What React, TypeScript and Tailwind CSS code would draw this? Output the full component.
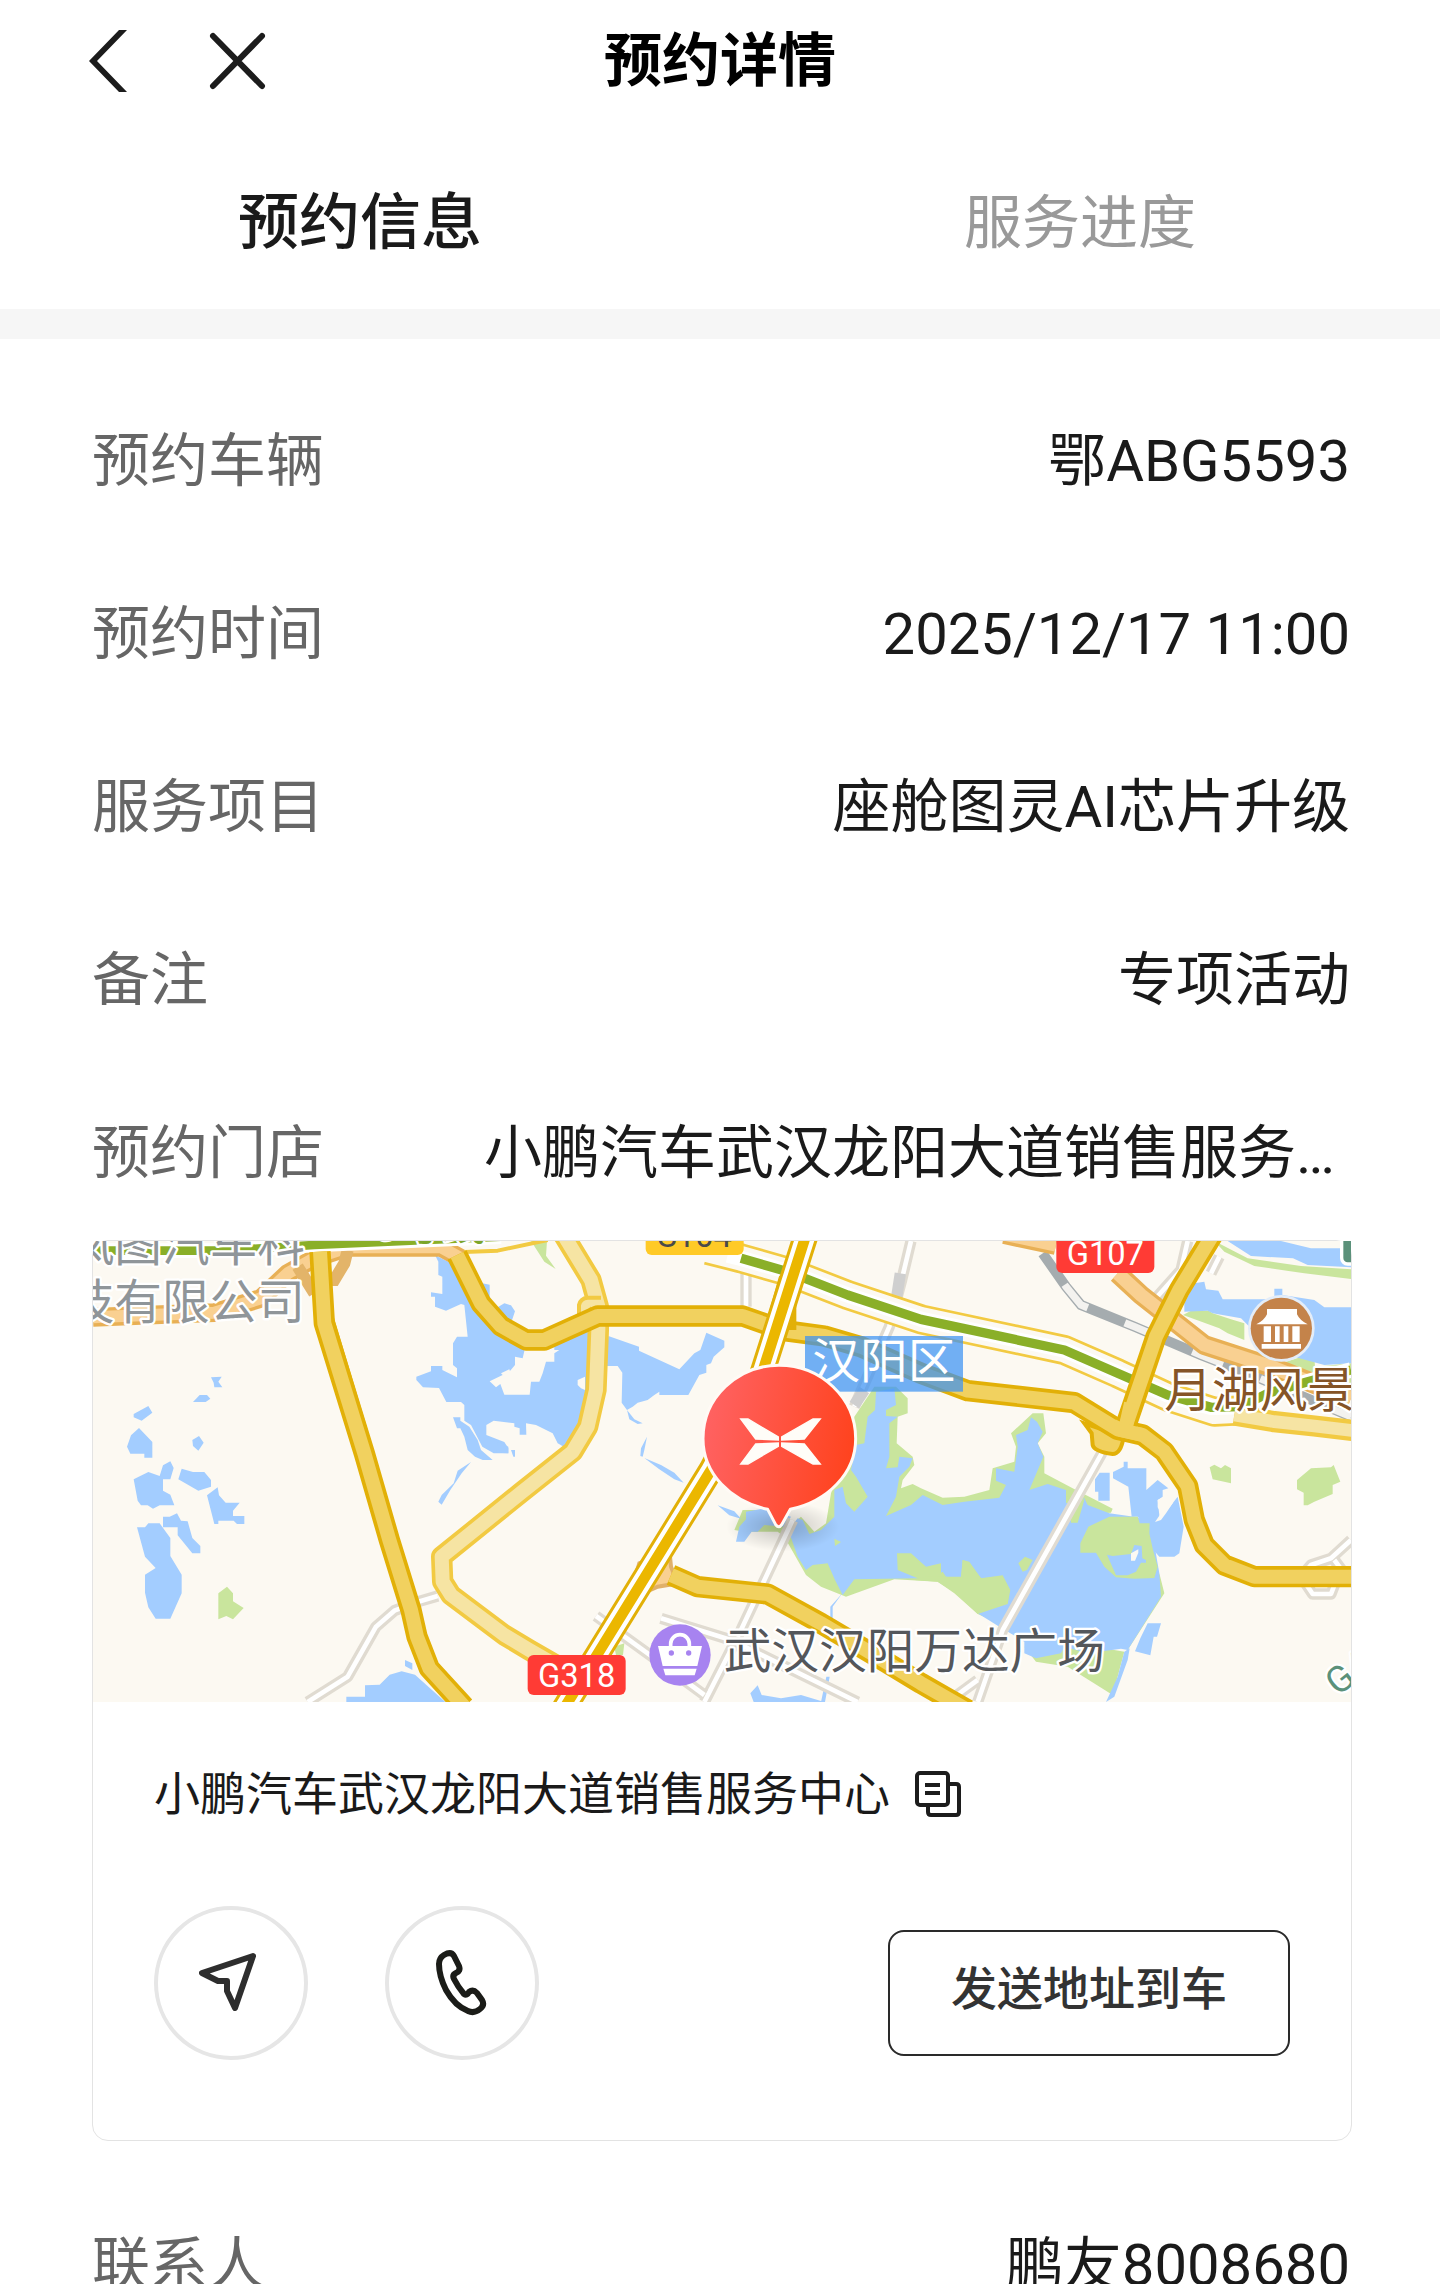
import type { ReactNode } from "react";

const details = [
  { label: "预约车辆", value: "鄂ABG5593" },
  { label: "预约时间", value: "2025/12/17 11:00" },
  { label: "服务项目", value: "座舱图灵AI芯片升级" },
  { label: "备注", value: "专项活动" },
  { label: "预约门店", value: "小鹏汽车武汉龙阳大道销售服务中心" },
];

function DetailRow({ label, value }: { label: string; value: string }) {
  return (
    <div className="flex h-[173px] items-center pr-[2px] text-[58px]">
      <dt className="shrink-0 text-[#666]">{label}</dt>
      <dd className="ml-40 min-w-0 flex-1 truncate text-right text-[#1a1a1a]">
        {value}
      </dd>
    </div>
  );
}

type RoadProps = {
  d: string;
  edge?: string;
  fill?: string;
  outer?: number;
  inner?: number;
};

function Road({
  d,
  edge = "#e2b007",
  fill = "#f1d15f",
  outer = 64,
  inner = 42,
}: RoadProps) {
  return (
    <g fill="none" strokeLinejoin="round">
      <path d={d} stroke={edge} strokeWidth={outer} />
      <path d={d} stroke={fill} strokeWidth={inner} />
    </g>
  );
}

function Street({ d }: { d: string }) {
  return <Road d={d} edge="#e0dbd1" fill="#fff" outer={34} inner={14} />;
}

function Shield({
  x,
  y,
  fill,
  color,
  children,
}: {
  x: number;
  y: number;
  fill: string;
  color: string;
  children: ReactNode;
}) {
  return (
    <g>
      <rect x={x} y={y} width="294" height="120" rx="18" fill={fill} />
      <text
        x={x + 147}
        y={y + 96}
        fontSize="98"
        textAnchor="middle"
        fill={color}
      >
        {children}
      </text>
    </g>
  );
}

function StoreMap() {
  return (
    <svg
      viewBox="36 33 3774 1383"
      className="block h-auto w-full bg-[#fcf9f2]"
      role="img"
      aria-label="门店地图"
    >
      <defs>
        <linearGradient id="pin" x1="0" y1="0.4" x2="1" y2="0.6">
          <stop offset="0" stopColor="#ff6262" />
          <stop offset="1" stopColor="#ff421c" />
        </linearGradient>
        <radialGradient id="pinShadow">
          <stop offset="0" stopColor="#000" stopOpacity="0.22" />
          <stop offset="1" stopColor="#000" stopOpacity="0" />
        </radialGradient>
      </defs>

      {/* west ponds */}
      <g fill="#a3cdff">
        <path d="M390 442l32-2-10 15 12 17h-24l-2-14zM336 516l20-21h22l10 11-14 10zM158 552l44-24 12 20-32 24-24-10zM138 650l12-34 24-22 40 42v47h-24v-12h-42zM334 630l20-12 14 20-16 24-16-14z" />
        <path d="M158 748l44-22 34 12 10-32 22-12 10 20-10 34h-22v34l22 12 12 32h-44l-20 10-16-10h-20l-10-14zM302 716l34 10h34l20 24v20l-38 12-60-34zM378 796l32-24 4 24 20 22h42l-20 24v16h34v24h-22l-10-10h-46v10h-12z" />
        <path d="M168 892h24l10-12h34l32 44v54l34 56v56l-34 76h-44l-22-34-10-44v-54l32-20-32-34zM246 860h20l22-10 12 22 20 2 14 50 24 24v22h-24l-44-54v-24h-44z" />
        <path d="M796 1400h56v-34l44-2 30-30 36-10 40 10 100 90H796zM972 1290l22 10v20l-22-12z" />
      </g>

      {/* lake north of the pin */}
      <g fill="#a3cdff">
        <path d="M1062 75L1110 100L1180 200L1204 160L1226 164V200L1245 235L1270 220L1290 226L1302 244L1290 280L1340 330L1400 345L1550 290L1560 500L1490 590L1448 650L1430 640L1415 610L1365 585L1335 580L1336 614H1316V595L1300 590V580L1238 572L1216 585V615L1270 636L1282 655V670H1238L1204 650L1170 585L1150 572V525L1140 516H1096L1074 474L1026 472L1006 450V440L1050 424V408H1084V420L1128 442V415L1116 405V340L1128 320H1160L1150 225L1140 222L1095 242L1062 230V200H1050V187L1084 192V140L1072 135V95Z" />
        <path d="M1116 562H1138V572L1165 590L1190 630L1200 660L1235 690H1205L1182 680L1160 660L1150 620L1138 595H1128ZM1170 696L1142 730L1108 780L1082 824L1072 815L1082 795L1118 760L1130 722Z" />
        <path d="M1582 318L1674 350V362L1795 418L1840 370L1858 360L1876 308L1930 332V352L1898 380L1890 400L1876 405V428L1855 435L1822 495H1735V485L1720 495L1700 510L1670 518L1655 530L1638 540L1622 518L1624 428L1610 408H1575Z" />
        <path d="M1638 540L1660 568L1685 580L1670 582L1645 568ZM1698 620L1690 660L1685 680L1678 678L1680 655ZM1690 684L1740 705L1780 728L1808 758L1780 748L1735 718Z" />
        <path d="M1250 635L1282 650V670L1245 668ZM1290 660H1302V680H1297Z" />
      </g>
      <g fill="#fcf9f2">
        <path d="M1226 454L1285 425L1302 405V380L1325 385L1332 355L1420 352V360H1435L1420 370V395H1395L1385 430L1375 455H1350L1346 494H1270L1258 462L1245 472ZM1260 430L1285 418L1290 432L1265 435Z" />
        <path d="M1490 450L1512 440V480L1500 475L1490 465Z" />
      </g>

      {/* parks and lake south-east of the pin */}
      <g fill="#c9e59d">
        <path d="M412 1090L438 1070L456 1090V1114L488 1134L456 1168L436 1158L412 1168Z" />
        <path d="M1350 33H1398L1395 77L1424 117L1390 95Z" />
        <path d="M1960 900L1985 840H2040V880L2130 885L2160 860L2200 905L2235 880L2250 790L2300 650L2320 560L2380 470H2445L2480 505V550L2450 560L2447 640L2495 680L2500 705L2465 750L2460 775L2495 762L2520 775L2585 803L2650 800L2725 780L2735 715L2800 695L2805 650L2790 610L2855 550H2887L2895 610L2870 640L2890 680V730L2975 775L3095 836L3090 848L3060 850L3000 870L2990 880L2800 1200L2690 1152L2625 1090L2570 1055L2440 1048L2295 1100L2220 1070L2175 1035L2110 920L2090 905L1990 905Z" />
        <path d="M2830 1250L2865 1295L2960 1310L3095 1395L3130 1265L3070 1255L2960 1235Z" />
        <path d="M3235 1030L3250 1090L3140 1260L3130 1240L3225 1100Z" />
        <path d="M3386 712L3400 704L3420 715L3432 705L3450 715V760L3395 748ZM3648 750L3690 715L3750 712L3758 705L3778 755L3755 765V792L3700 815L3680 826H3668V788L3648 778Z" />
        <path d="M3400 33L3500 85L3660 108L3810 118V147L3670 130L3520 108L3430 65ZM3306 255L3330 242H3384L3395 250L3450 268L3490 280V330L3440 310L3415 295Z" />
        <path d="M3530 380L3600 400L3680 375L3700 380L3702 410L3810 400V470H3560ZM1600 1250L1630 1240L1626 1275H1605Z" />
      </g>
      <g fill="#a3cdff">
        <path d="M1910 826L1960 844L1980 866L1945 856ZM1995 868V845L2050 835L2130 860L2110 890L2050 885L2030 905L2012 905L1990 935H1965L1975 890Z" />
        <path d="M2122 900L2150 865L2165 870L2185 912L2220 900L2260 860V780L2285 770L2295 820L2320 845L2360 800L2325 740L2310 720L2325 645L2350 640L2360 560L2382 540L2385 485L2440 475L2445 525L2415 540V558L2450 560L2425 580V680L2415 715L2450 712L2455 680L2495 685L2485 710L2455 740L2445 800L2415 858L2490 825L2525 795L2585 825L2650 815L2755 803L2775 765L2745 752V715L2800 725L2810 650L2805 615L2840 600L2850 562L2868 575L2885 605L2870 640L2887 680L2845 780L2900 762L2955 780V820L3010 805L3020 825L3085 850L3170 862L3210 880L3228 990L3235 1030L3240 1100L3140 1260L3120 1256L3020 1270L2950 1250L2940 1270L2865 1285L2830 1270V1235L2755 1190L2690 1150L2780 1120L2785 1080L2765 1040L2700 1045L2665 1000L2645 990L2640 1045L2595 1040L2585 1025L2555 1045L2520 1000L2510 1045L2320 1048L2285 1095L2262 1050L2240 1000L2195 1005L2175 1020L2150 980Z" />
        <path d="M3042 748L3056 728H3086V812H3052V785H3042ZM3096 726L3128 710V695H3140V715H3196V780L3230 750L3262 775L3245 780V800L3230 810L3236 865L3255 845L3275 820L3290 800L3308 890L3295 970L3280 980H3235L3200 940L3198 885L3170 860H3152L3142 770L3096 745Z" />
        <path d="M3200 1180H3240L3228 1220H3218L3208 1276L3162 1264L3178 1225ZM3075 1416L3110 1340L3130 1265L3146 1255L3140 1290L3100 1400ZM2284 1090L2255 1130V1165H2248V1130Z" />
        <path d="M2008 1390L2030 1366L2042 1395L2100 1405L2160 1395L2230 1416H2018ZM2220 1416L2236 1340H2246L2232 1416Z" />
        <path d="M3440 33H3600L3640 43L3690 55H3810V112L3680 105L3636 85L3510 78ZM3310 220L3340 160L3370 155L3375 178L3412 182L3425 208H3580V176H3604V195L3700 210L3730 232H3810V400L3730 405L3600 370L3500 285L3480 265L3395 250L3380 242L3310 245Z" />
      </g>
      <g fill="#c9e59d">
        <path d="M2998 940L3022 890L3085 860H3170L3176 880L3206 880L3205 910L3216 960L3230 1010L3220 1044L3160 1046L3105 1042L3070 1010L3045 968H2998Z" />
        <path d="M2448 970H2490L2535 1010L2580 1000V1045H2510L2450 1020ZM2260 926L2280 936L2262 948ZM2812 1000L2832 980L2855 990L2838 1020L2825 1025Z" />
        <path d="M2645 990L2665 995L2700 1045L2765 1036L2788 1080L2780 1122L2690 1152L2620 1090L2570 1055L2500 1050L2530 1040H2640Z" />
        <path d="M2955 780L2980 780L3010 810L2990 878H2970L2965 840Z" />
      </g>
      <path
        d="M3078 974L3095 978L3150 972L3160 945L3182 948L3184 985L3195 990V998H3180L3165 1025L3140 1036H3105Z"
        fill="#a3cdff"
      />
      <path d="M3150 970L3172 958V968L3162 992H3150Z" fill="#fcf9f2" />
      <path
        d="M3222 876L3240 850L3230 832V810L3275 790L3275 820L3255 850L3240 870Z"
        fill="#fcf9f2"
      />

      {/* streets */}
      <Street d="M1070 1098L1012 1115L940 1142L885 1190L800 1340L680 1416" />
      <Street d="M1995 90V230" />
      <Street d="M2490 33L2462 150L2425 290L2320 530" />
      <Street d="M2135 870L1980 1200L1870 1416" />
      <Street d="M3065 665L2765 1200L2690 1416" />
      <Street d="M1545 1158L1700 1270L1870 1395" />
      <Street d="M1740 1165L1950 1230L2330 1416" />
      <Street d="M2600 1416L2690 1350" />
      <Street d="M3320 33L3300 120L3220 210M3415 80L3390 130" />
      <Street d="M3810 930L3750 985L3690 1005L3660 1040L3695 1092H3750L3770 1040M3760 990L3790 1030" />
      <path
        d="M2458 130L2445 215M2350 480L2320 525"
        stroke="#cfcfcf"
        strokeWidth="34"
      />

      {/* railway */}
      <g fill="none">
        <path
          d="M2885 70L2955 170L3000 225L3160 290L3360 375L3500 430L3810 560"
          stroke="#a5acaf"
          strokeWidth="30"
        />
        <path
          d="M2885 70L2955 170L3000 225L3160 290L3360 375L3500 430L3810 560"
          stroke="#f3f2ef"
          strokeWidth="22"
          strokeDasharray="100 120"
          strokeDashoffset="-115"
        />
      </g>

      {/* orange ring road */}
      <Road
        d="M36 262L180 256L400 248L540 205L620 130L700 85L800 52H1080L1140 85"
        edge="#e8b055"
        fill="#f9d091"
        outer={56}
        inner={36}
      />
      <path
        d="M650 110L700 190M690 150L760 150L790 100L800 60"
        stroke="#e3b469"
        strokeWidth="36"
        fill="none"
      />
      <Road
        d="M2770 12L2925 45"
        edge="#e8b055"
        fill="#f9d091"
        outer={60}
        inner={40}
      />
      <Road
        d="M3110 130L3180 195L3370 345L3570 410L3810 505"
        edge="#e8b055"
        fill="#f9d091"
        outer={60}
        inner={40}
      />
      <path
        d="M1640 1110L1675 1000L1700 990L1760 910L1770 1010L1790 1060L1730 1070Z"
        fill="#f9d091"
        stroke="#e0b06a"
        strokeWidth="12"
      />

      {/* expressway */}
      <g fill="none" strokeLinejoin="round">
        <path
          d="M1880 60L1980 85L2120 125L2300 195L2520 268L2950 360L3110 430L3260 500L3400 545L3500 540"
          stroke="#f2ca42"
          strokeWidth="90"
        />
        <path
          d="M1870 57L1980 85L2120 125L2300 195L2520 268L2950 360L3110 430L3260 500L3400 545L3510 540"
          stroke="#fcf9f2"
          strokeWidth="74"
        />
        <path
          d="M1940 75L1980 85L2120 125L2300 195L2520 268L2950 360L3110 430L3260 495L3390 532L3480 530L3560 490L3680 455L3810 420"
          stroke="#fff"
          strokeWidth="46"
        />
        <path
          d="M1980 85L2120 125L2300 195L2520 268L2950 360L3110 430L3260 495L3390 532L3480 530L3560 490L3680 455L3810 420"
          stroke="#8aaf28"
          strokeWidth="28"
        />
        <path
          d="M36 62H430L700 45L1260 20"
          stroke="#fff"
          strokeWidth="44"
        />
        <path
          d="M36 62H430L700 45L1260 20"
          stroke="#8aaf28"
          strokeWidth="26"
        />
        <path
          d="M1150 66L1250 62L1400 30"
          stroke="#f2ca42"
          strokeWidth="12"
        />
      </g>

      <Road
        d="M3460 555L3580 575L3700 588L3820 602"
        edge="#f2ca42"
        fill="#f6e4a3"
        inner={38}
      />
      <Road
        d="M1445 10L1530 150L1552 230V300L1545 480L1520 590L1475 665L1320 788L1082 980L1085 1055L1110 1095L1270 1215L1345 1260L1450 1320"
        edge="#f2ca42"
        fill="#f6e4a3"
      />
      <path
        d="M1494 260V225Q1498 205 1520 203H1560"
        stroke="#f2ca42"
        strokeWidth="12"
        fill="#f6e4a3"
      />

      {/* main roads */}
      <path
        d="M3010 580L3032 610L3035 645Q3040 665 3095 672Q3120 672 3128 620Z"
        fill="#f1d15f"
        stroke="#e2b007"
        strokeWidth="12"
      />
      <Road d="M1128 75L1200 220L1260 288L1335 330H1390L1550 258H1985L2110 302L2230 318L2340 350L2520 430L2660 482L2980 518L3110 598L3185 615L3250 665L3320 768L3340 870L3370 945L3430 1005L3520 1040H3820" />
      <Road d="M3395 15L3295 180L3225 320L3135 585" />
      <path
        d="M3150 520L3132 600"
        stroke="#f1d15f"
        strokeWidth="42"
      />
      <path
        d="M3095 587L3120 600L3185 615"
        stroke="#f1d15f"
        strokeWidth="42"
        fill="none"
      />
      <path d="M755 250L860 600L920 850L870 830L800 500Z" fill="#e2b007" />
      <Road d="M717 65L730 280L850 670L925 930L990 1140L1008 1220L1045 1315L1150 1430" />
      <Road d="M1770 1035L1850 1070L2060 1092L2220 1180L2380 1275L2520 1360L2660 1440" />

      <path
        d="M2105 140L2060 300M2135 180V300"
        stroke="#e2b007"
        strokeWidth="22"
      />
      <g fill="none">
        <path
          d="M2175 15L2040 440L1890 720L1440 1450"
          stroke="#e2b007"
          strokeWidth="76"
        />
        <path
          d="M2175 15L2040 440L1890 720L1440 1450"
          stroke="#fff"
          strokeWidth="58"
        />
        <path
          d="M2175 15L2040 440L1890 720L1440 1450"
          stroke="#ebb700"
          strokeWidth="32"
        />
      </g>

      {/* labels */}
      <g
        fontSize="143"
        stroke="#fff"
        strokeWidth="14"
        strokeLinejoin="round"
        paintOrder="stroke"
      >
        <g fill="#8f9599">
          <text x="-43" y="92">
            岚图汽车科
          </text>
          <text x="-43" y="268">
            技有限公司
          </text>
        </g>
        <text x="880" y="30" fontSize="130" fill="#7ba52a">
          3号线
        </text>
        <text x="1928" y="1314" fill="#54575b">
          武汉汉阳万达广场
        </text>
        <text x="3250" y="532" fill="#855427">
          月湖风景区
        </text>
        <text
          x="3770"
          y="1400"
          fontSize="110"
          fill="#5b917a"
          transform="rotate(-38 3770 1400)"
        >
          G4
        </text>
      </g>
      <rect
        x="3782"
        y="-20"
        width="120"
        height="122"
        rx="18"
        fill="#5b917a"
        stroke="#fff"
        strokeWidth="10"
      />
      <rect
        x="2172"
        y="318"
        width="474"
        height="167"
        fill="#3c91f3"
        opacity="0.72"
      />
      <text x="2194" y="444" fontSize="143" fill="#fff">
        汉阳区
      </text>

      <Shield x={1694} y={-45} fill="#ffca27" color="#4a4a4a">
        S104
      </Shield>
      <Shield x={2926} y={9} fill="#ff3b35" color="#fff">
        G107
      </Shield>
      <Shield x={1340} y={1275} fill="#ff3b35" color="#fff">
        G318
      </Shield>

      {/* scenic spot */}
      <circle cx="3601" cy="295" r="100" fill="#e4edf8" />
      <circle cx="3601" cy="295" r="92" fill="#c4834a" />
      <g fill="#fff">
        <path d="M3558 237h90v16q8 18 32 30h-154q24-12 32-30z" />
        <path d="M3548 289h22v47h-22zM3582 289h14v47h-14zM3608 289h14v47h-14zM3634 289h22v47h-22zM3542 342h118v14h-118z" />
      </g>

      {/* shopping mall */}
      <circle cx="1797" cy="1275" r="92" fill="#a783f0" />
      <path
        d="M1769 1250v-8a28 28 0 0 1 56 0v8"
        fill="none"
        stroke="#fff"
        strokeWidth="11"
      />
      <path
        d="M1731 1248h132l-14 60h-104zM1747 1316h100l-6 20h-88z"
        fill="#fff"
      />
      <circle cx="1771" cy="1269" r="8" fill="#a783f0" />
      <circle cx="1823" cy="1269" r="8" fill="#a783f0" />

      {/* store pin */}
      <ellipse cx="2105" cy="890" rx="170" ry="75" fill="url(#pinShadow)" />
      <path
        d="M2060 838C1948 814 1866 730 1866 626C1866 504 1968 406 2094 406S2324 504 2324 626C2324 730 2240 814 2128 838L2102 884Q2094 896 2084 884Z"
        fill="url(#pin)"
        stroke="#fffaf5"
        strokeWidth="9"
        strokeLinejoin="round"
      />
      <path
        d="M1979 567H2001L2092 621V630L2024 627ZM1979 702H2001L2092 649V639L2024 642ZM2218 567H2196L2102 621V630L2170 627ZM2218 702H2196L2102 649V639L2170 642Z"
        fill="#fffdf8"
        stroke="#fffdf8"
        strokeWidth="4"
      />
    </svg>
  );
}

export default function App() {
  return (
    <main className="h-[2284px] overflow-hidden bg-white font-[Roboto,'Noto_Sans_CJK_SC',sans-serif]">
      <header className="grid grid-cols-[1fr_auto_1fr] items-center pt-2">
        <div className="flex items-center gap-20 pl-[88px]">
          <button type="button" aria-label="返回">
            <svg width="40" height="62" viewBox="0 0 40 62">
              <path
                d="M31 0H39L9 31L39 62H31L1 31Z"
                fill="#1c1c1c"
              />
            </svg>
          </button>
          <button type="button" aria-label="关闭">
            <svg
              width="60"
              height="60"
              viewBox="0 0 60 60"
              stroke="#1c1c1c"
              strokeWidth="6"
              strokeLinecap="round"
            >
              <path d="M5 5L54 55M54 5L5 55" />
            </svg>
          </button>
        </div>
        <h1 className="text-[58px] leading-[106px] font-bold text-black">
          预约详情
        </h1>
      </header>

      <nav className="grid h-[195px] grid-cols-2 items-center">
        <button
          type="button"
          className="pt-6 text-[61px] font-medium text-[#1a1a1a]"
        >
          预约信息
        </button>
        <button type="button" className="pt-6 text-[58px] text-[#999]">
          服务进度
        </button>
      </nav>

      <div className="h-[30px] bg-[#f6f6f6]" />

      <section className="pt-9 pr-[88px] pl-[92px]">
        <dl>
          {details.map((item) => (
            <DetailRow key={item.label} {...item} />
          ))}
        </dl>

        <div className="rounded-2xl border border-[#e3e3e3]">
          <StoreMap />
          <div className="px-[61px] pt-[58px] pb-20">
            <div className="flex items-center gap-6">
              <p className="text-[46px] leading-[68px] text-[#1a1a1a]">
                小鹏汽车武汉龙阳大道销售服务中心
              </p>
              <button type="button" aria-label="复制">
                <svg
                  width="48"
                  height="48"
                  viewBox="0 0 48 48"
                  fill="none"
                  stroke="#1c1c1c"
                  strokeWidth="4"
                  strokeLinejoin="round"
                >
                  <rect x="3" y="3" width="31" height="32" rx="3" />
                  <path d="M35 14H42Q45 14 45 17V42Q45 45 42 45H17Q14 45 14 42V36" />
                  <path d="M11 15H26M11 23H26" />
                </svg>
              </button>
            </div>

            <div className="mt-[78px] flex items-center">
              <button
                type="button"
                aria-label="导航"
                className="flex size-[154px] items-center justify-center rounded-full border-4 border-[#e6e6e6]"
              >
                <svg
                  width="64"
                  height="64"
                  viewBox="3 1 64 64"
                  fill="none"
                  stroke="#2e2e2e"
                  strokeWidth="6"
                  strokeLinejoin="round"
                >
                  <path d="M57 6L6 23L22 31H31V41L39 58Z" />
                </svg>
              </button>
              <button
                type="button"
                aria-label="拨打电话"
                className="ml-[77px] flex size-[154px] items-center justify-center rounded-full border-4 border-[#e6e6e6]"
              >
                <svg
                  width="64"
                  height="72"
                  viewBox="0 0 64 72"
                  fill="none"
                  stroke="#1b1c18"
                  strokeWidth="6"
                  strokeLinejoin="round"
                >
                  <path d="M14 8Q21 4 24 9L29 19Q31 24 26 26Q22 28 24 32Q28 40 34 47Q37 49 39 45Q43 42 47 46L52 53Q55 58 50 62Q44 67 38 64Q25 59 16 43Q9 29 9 17Q9 11 14 8Z" />
                </svg>
              </button>
              <button
                type="button"
                className="mt-5 ml-auto h-[126px] rounded-2xl border-2 border-[#2a2a2a] px-[61px] pb-2 text-[46px] font-medium text-[#333]"
              >
                发送地址到车
              </button>
            </div>
          </div>
        </div>

        <dl className="pt-[38px]">
          <DetailRow label="联系人" value="鹏友8008680" />
        </dl>
      </section>
    </main>
  );
}
